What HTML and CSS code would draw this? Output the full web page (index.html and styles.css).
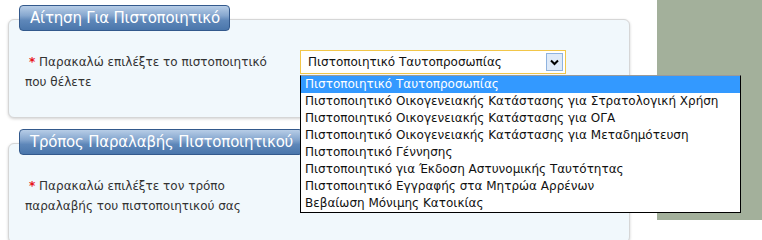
FILE: index.html
```html
<!DOCTYPE html>
<html lang="el">
<head>
<meta charset="utf-8">
<title>Αίτηση Για Πιστοποιητικό</title>
<link rel="stylesheet" href="styles.css">
</head>
<body>
<div class="page">
  <div class="main">
    <section class="section">
      <h2 class="tab">Αίτηση Για Πιστοποιητικό</h2>
      <div class="panel">
        <div class="row">
          <label class="label"><span class="req">*</span> Παρακαλώ επιλέξτε το πιστοποιητικό που θέλετε</label>
          <div class="field">
            <div class="select">
              <span class="select-text">Πιστοποιητικό Ταυτοπροσωπίας</span>
              <span class="select-btn">
                <svg width="9" height="7" viewBox="0 0 9 7"><path d="M1 1.5 L4.5 5 L8 1.5" fill="none" stroke="#000" stroke-width="2"/></svg>
              </span>
            </div>
            <ul class="options">
              <li class="opt selected">Πιστοποιητικό Ταυτοπροσωπίας</li>
              <li class="opt">Πιστοποιητικό Οικογενειακής Κατάστασης για Στρατολογική Χρήση</li>
              <li class="opt">Πιστοποιητικό Οικογενειακής Κατάστασης για ΟΓΑ</li>
              <li class="opt">Πιστοποιητικό Οικογενειακής Κατάστασης για Μεταδημότευση</li>
              <li class="opt">Πιστοποιητικό Γέννησης</li>
              <li class="opt">Πιστοποιητικό για Έκδοση Αστυνομικής Ταυτότητας</li>
              <li class="opt">Πιστοποιητικό Εγγραφής στα Μητρώα Αρρένων</li>
              <li class="opt">Βεβαίωση Μόνιμης Κατοικίας</li>
            </ul>
          </div>
        </div>
      </div>
    </section>
    <section class="section second">
      <h2 class="tab">Τρόπος Παραλαβής Πιστοποιητικού</h2>
      <div class="panel">
        <div class="row">
          <label class="label"><span class="req">*</span> Παρακαλώ επιλέξτε τον τρόπο παραλαβής του πιστοποιητικού σας</label>
          <div class="field">
            <div class="select"></div>
          </div>
        </div>
      </div>
    </section>
  </div>
  <div class="side"></div>
</div>
</body>
</html>
```
FILE: styles.css
```css
html, body {
  margin: 0;
  padding: 0;
  height: 100%;
  overflow: hidden;
}
body {
  font-family: "DejaVu Sans", "Liberation Sans", sans-serif;
  color: #333;
  background: #fff;
}
.page {
  display: flex;
  height: 220px;
}
.main {
  width: 657px;
  flex: none;
  box-sizing: border-box;
  padding: 5px 27px 0 8px;
  background: #fff;
}
.side {
  flex: 1;
  background: #a3b09b;
}
.section {
  display: flex;
  flex-direction: column;
  align-items: flex-start;
}
.section.second {
  margin-top: 11px;
}
.tab {
  margin: 0 0 0 11px;
  position: relative;
  z-index: 1;
  height: 26px;
  box-sizing: border-box;
  padding: 0 9px 0 10px;
  border: 1px solid #33598c;
  border-radius: 4px;
  background: linear-gradient(#b7cde7 0%, #86a7cf 40%, #5e87b9 60%, #4a76ab 100%);
  color: #fff;
  font-size: 15px;
  font-weight: normal;
  line-height: 24px;
  white-space: nowrap;
  letter-spacing: -0.2px;
}
.panel {
  align-self: stretch;
  margin-top: -12px;
  box-sizing: border-box;
  height: 99px;
  padding: 30px 0 0 16px;
  background: #f1f8fc;
  border: 1px solid #d6d6d6;
  border-radius: 6px;
  box-shadow: 0 1px 3px rgba(0, 0, 0, 0.18);
}
.second .panel {
  height: 100px;
}
.row {
  display: flex;
  align-items: flex-start;
}
.label {
  width: 275px;
  flex: none;
  margin-top: 2px;
  font-size: 12px;
  line-height: 20px;
  color: #333;
  padding-right: 20px;
  box-sizing: border-box;
}
.req {
  color: #e8141b;
  font-weight: bold;
  margin-left: 4px;
}
.field {
  position: relative;
}
.select {
  width: 266px;
  height: 24px;
  box-sizing: border-box;
  border: 1px solid #f2c649;
  background: #fff;
  display: flex;
  align-items: center;
  justify-content: space-between;
  padding: 0 2px 0 7px;
  font-size: 12px;
  color: #111;
}
.select-btn {
  width: 17px;
  height: 18px;
  box-sizing: border-box;
  border: 1px solid #8fb3df;
  background: #dfeaf8;
  display: flex;
  align-items: center;
  justify-content: center;
}
.options {
  position: absolute;
  z-index: 10;
  top: 25px;
  left: 0;
  width: 441px;
  margin: 0;
  padding: 0;
  list-style: none;
  background: #fff;
  border: 1px solid #000;
  border-top-color: #9a9a9a;
  box-sizing: border-box;
}
.opt {
  height: 17px;
  line-height: 17px;
  padding-left: 4px;
  font-size: 12px;
  color: #111;
  white-space: nowrap;
}
.opt.selected {
  background: #3399ff;
  color: #fff;
}
```
